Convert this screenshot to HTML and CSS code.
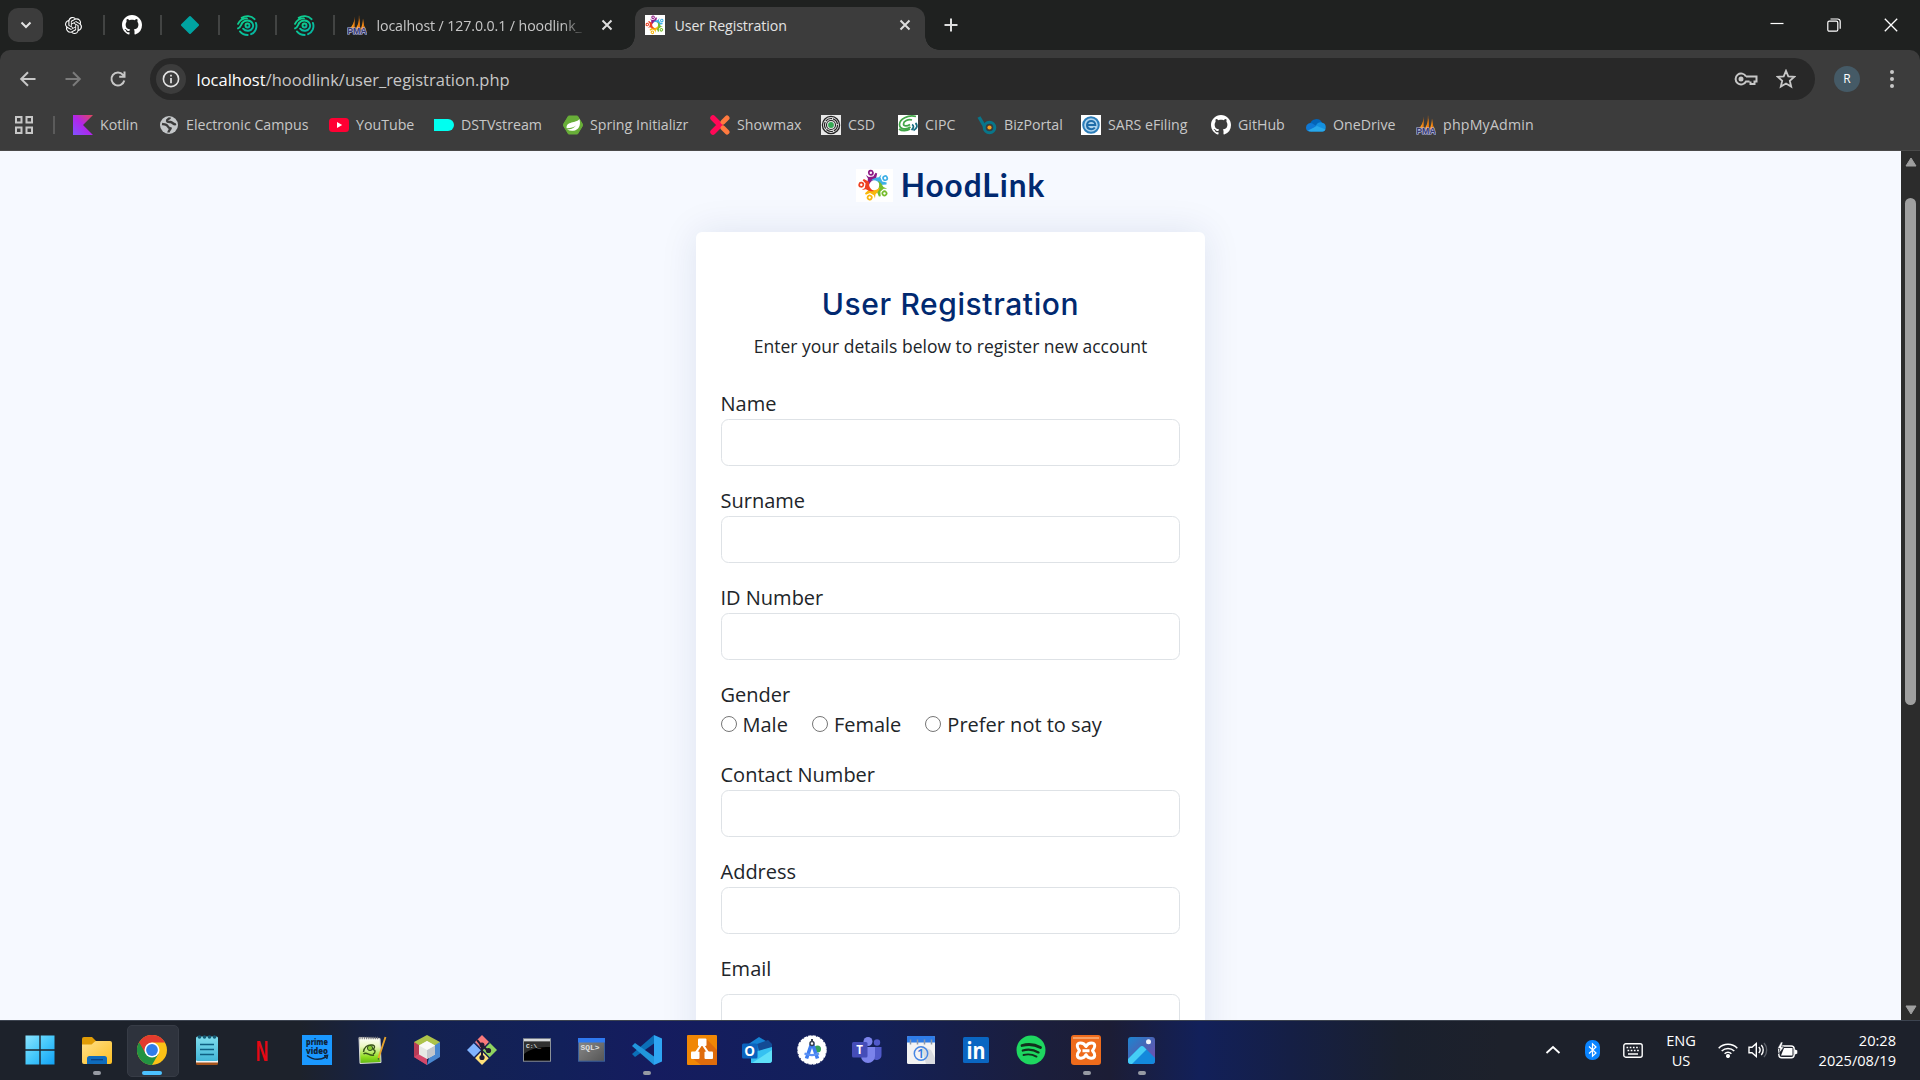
FILE: index.html
```html
<!DOCTYPE html>
<html lang="en">
<head>
<meta charset="utf-8">
<title>User Registration</title>
<link rel="stylesheet" href="styles.css">
</head>
<body>
<svg class="defs" width="0" height="0" aria-hidden="true">
  <defs>
    <linearGradient id="g-kotlin" x1="0" y1="1" x2="1" y2="0"><stop offset="0" stop-color="#7f52ff"/><stop offset=".5" stop-color="#b125ea"/><stop offset="1" stop-color="#e44857"/></linearGradient>
    <linearGradient id="g-win" x1="0" y1="0" x2="1" y2="1"><stop offset="0" stop-color="#8be4ff"/><stop offset=".5" stop-color="#45c8fb"/><stop offset="1" stop-color="#12a2f5"/></linearGradient>
    <linearGradient id="g-folder" x1="0" y1="0" x2="1" y2="1"><stop offset="0" stop-color="#ffe08a"/><stop offset="1" stop-color="#fdbf22"/></linearGradient>
    <linearGradient id="g-note" x1="0" y1="0" x2="0" y2="1"><stop offset="0" stop-color="#7fdcec"/><stop offset="1" stop-color="#42b7d8"/></linearGradient>
    <linearGradient id="g-sql" x1="0" y1="0" x2="1" y2="1"><stop offset="0" stop-color="#8c8c8c"/><stop offset="1" stop-color="#555"/></linearGradient>
    <linearGradient id="g-photo" x1="0" y1="0" x2="1" y2="1"><stop offset="0" stop-color="#1c86d1"/><stop offset=".5" stop-color="#4a63b5"/><stop offset="1" stop-color="#7a4bb0"/></linearGradient>
    <linearGradient id="g-np" x1="0" y1="0" x2="0" y2="1"><stop offset="0" stop-color="#fff"/><stop offset=".35" stop-color="#eaf7c0"/><stop offset=".75" stop-color="#8fdc20"/><stop offset="1" stop-color="#5bb512"/></linearGradient>
    <linearGradient id="g-ring" x1="0" y1="0" x2="1" y2="1"><stop offset="0" stop-color="#10d38a"/><stop offset="1" stop-color="#04b3a4"/></linearGradient>
    <symbol id="github" viewBox="0 0 16 16"><path fill="#fff" d="M8 0C3.58 0 0 3.58 0 8c0 3.54 2.29 6.53 5.47 7.59.4.07.55-.17.55-.38 0-.19-.01-.82-.01-1.49-2.01.37-2.53-.49-2.69-.94-.09-.23-.48-.94-.82-1.13-.28-.15-.68-.52-.01-.53.63-.01 1.08.58 1.23.82.72 1.21 1.87.87 2.33.66.07-.52.28-.87.51-1.07-1.78-.2-3.64-.89-3.64-3.95 0-.87.31-1.59.82-2.15-.08-.2-.36-1.02.08-2.12 0 0 .67-.21 2.2.82.64-.18 1.32-.27 2-.27s1.36.09 2 .27c1.53-1.04 2.2-.82 2.2-.82.44 1.1.16 1.92.08 2.12.51.56.82 1.27.82 2.15 0 3.07-1.87 3.75-3.65 3.95.29.25.54.73.54 1.48 0 1.07-.01 1.93-.01 2.2 0 .21.15.46.55.38A8.01 8.01 0 0 0 16 8c0-4.42-3.58-8-8-8z"/></symbol>
    <symbol id="fingerprint" viewBox="0 0 20 20"><g fill="none" stroke="url(#g-ring)" stroke-width="1.800" stroke-linecap="round"><circle cx="10" cy="10" r="1.900"/><path d="M1 12.800C3.500 11.800 3.700 9.500 5 7.500 7.500 4.200 13 4.500 14.800 8c1.500 3-.2 6.500-3.800 7-2.200.3-4-.5-5.200-2"/><path d="M1 8.400C2.800 4.500 6 3.300 9.500 3.200M4.500 2.700C8 .3 13.500.4 16.700 4M18 7.500c1.600 4.500-.5 9-4.600 10.800M2.800 15.600c2 2.500 4.600 3.400 7.400 3.400"/></g></symbol>
    <symbol id="pma" viewBox="0 0 20 20"><path fill="#f8981d" d="M7.500 1.500C7.800 6 6 11 1.500 14.500h5.800zM12 0c1 5-1 10.500-4 14.500h5.200zM16 3.500c-.2 4-1 7.500-2.500 11h5.700c-2-2.500-3-6-3.200-11z"/><path fill="#e0700a" d="M12 0l1.200 14.500h-2zM7.500 1.500v13H6zM16 3.500l1.300 11h-1.500z"/><text x="10" y="19.400" text-anchor="middle" textLength="19.500" lengthAdjust="spacingAndGlyphs" font-family="Liberation Sans" font-weight="bold" font-size="8.500" fill="#353870" stroke="#b9bde0" stroke-width="1.200" paint-order="stroke">PMA</text></symbol>
    <g id="person"><path d="M10 6l2.800 2.600h4.700L20.400 4.800l1.700 1.100-2.300 6.200C16 12 12.300 14.300 11.400 19c-1.400-3.200-.4-6.400.3-9z"/><circle cx="15.500" cy="4.300" r="3.100"/><circle cx="15.500" cy="4.300" r="1.300" fill="#fff"/></g>
    <symbol id="people" viewBox="0 0 34 34">
      <g transform="translate(17.300 16.800) rotate(-7) scale(.97) translate(-17.500 -18)">
        <use href="#person" fill="#8e1b86"/>
        <use href="#person" transform="rotate(72 17.500 18)" fill="#3fb0e6"/>
        <use href="#person" transform="rotate(144 17.500 18)" fill="#76bc2c"/>
        <use href="#person" transform="rotate(216 17.500 18)" fill="#f9b70c"/>
        <use href="#person" transform="rotate(288 17.500 18)" fill="#ee4023"/>
      </g>
    </symbol>
  </defs>
</svg>

<header class="browser">
  <div class="tabstrip">
    <button class="tab-search"><svg width="12" height="12" viewBox="0 0 12 12"><path d="M1.500 3.500L6 8l4.500-4.500" fill="none" stroke="#e3e3e3" stroke-width="2"/></svg></button>
    <div class="pinned">
      <svg width="17" height="17" viewBox="0 0 24 24"><path fill="#fff" d="M22.280 9.820a5.980 5.980 0 0 0-.52-4.910 6.050 6.050 0 0 0-6.510-2.900A6.070 6.070 0 0 0 4.980 4.180a5.980 5.980 0 0 0-4 2.900 6.050 6.050 0 0 0 .74 7.100 5.980 5.980 0 0 0 .51 4.910 6.050 6.050 0 0 0 6.510 2.900A5.980 5.980 0 0 0 13.260 24a6.060 6.060 0 0 0 5.770-4.210 5.990 5.990 0 0 0 4-2.900 6.060 6.060 0 0 0-.75-7.070zm-9.020 12.610a4.480 4.480 0 0 1-2.880-1.040l.14-.08 4.780-2.760a.8.8 0 0 0 .39-.68v-6.740l2.020 1.170a.07.07 0 0 1 .04.05v5.580a4.500 4.500 0 0 1-4.490 4.500zM3.600 18.300a4.470 4.470 0 0 1-.54-3.010l.14.090 4.780 2.760a.77.77 0 0 0 .78 0l5.840-3.370v2.330a.08.08 0 0 1-.03.06L9.740 19.950a4.500 4.500 0 0 1-6.140-1.650zM2.340 7.900a4.490 4.490 0 0 1 2.370-1.970v5.680a.77.77 0 0 0 .39.680l5.810 3.350-2.020 1.170a.08.08 0 0 1-.07 0L4 14.020A4.500 4.500 0 0 1 2.340 7.900zm16.600 3.860L13.100 8.360l2.020-1.160a.08.08 0 0 1 .07 0l4.830 2.790a4.490 4.490 0 0 1-.68 8.100v-5.680a.79.790 0 0 0-.4-.65zm2.010-3.020l-.14-.09-4.770-2.780a.78.780 0 0 0-.79 0L9.410 9.230V6.900a.07.070 0 0 1 .03-.06l4.830-2.790a4.500 4.500 0 0 1 6.680 4.660zM8.310 12.860l-2.020-1.160a.08.08 0 0 1-.04-.06V6.070a4.500 4.500 0 0 1 7.380-3.450l-.14.080L8.700 5.460a.8.8 0 0 0-.39.68zm1.100-2.360l2.600-1.500 2.600 1.500v3l-2.600 1.500-2.600-1.500z"/></svg>
    </div>
    <div class="pinned"><svg width="20" height="20"><use href="#github"/></svg></div>
    <div class="pinned"><svg width="20" height="20" viewBox="0 0 20 20"><rect x="3.300" y="3.300" width="13.400" height="13.400" rx="1" transform="rotate(45 10 10)" fill="#00a3a1"/></svg></div>
    <div class="pinned"><svg width="21" height="21"><use href="#fingerprint"/></svg></div>
    <div class="pinned"><svg width="21" height="21"><use href="#fingerprint"/></svg></div>
    <div class="tab">
      <svg width="20" height="20"><use href="#pma"/></svg>
      <span class="tab-title fade">localhost / 127.0.0.1 / hoodlink_</span>
      <svg class="close" width="12" height="12" viewBox="0 0 12 12"><path d="M1.500 1.500l9 9M10.500 1.500l-9 9"/></svg>
    </div>
    <div class="tab active">
      <svg class="fav" width="20" height="20" viewBox="0 0 34 34"><use href="#people" width="34" height="34"/></svg>
      <span class="tab-title">User Registration</span>
      <svg class="close" width="12" height="12" viewBox="0 0 12 12"><path d="M1.500 1.500l9 9M10.500 1.500l-9 9"/></svg>
    </div>
    <svg class="newtab" width="14" height="14" viewBox="0 0 14 14"><path d="M7 .5v13M.5 7h13" stroke="#dedede" stroke-width="2"/></svg>
    <div class="window-controls">
      <svg width="14" height="14" viewBox="0 0 14 14"><path d="M.5 5.500h13" stroke="#fff" stroke-width="1.200"/></svg>
      <svg width="14" height="14" viewBox="0 0 14 14" fill="none" stroke="#fff" stroke-width="1.200"><rect x=".8" y="3.200" width="10" height="10" rx="1.500"/><path d="M3.500 1h7.200A2.500 2.500 0 0 1 13.200 3.500v7.200"/></svg>
      <svg width="14" height="14" viewBox="0 0 14 14"><path d="M.8.800l12.400 12.400M13.200.800L.8 13.200" stroke="#fff" stroke-width="1.300"/></svg>
    </div>
  </div>

  <div class="toolbar">
    <div class="nav">
      <svg width="18" height="18" viewBox="0 0 18 18" fill="none" stroke="#c7c7c7" stroke-width="2"><path d="M16.500 9H2.500M9 2.200L2.200 9 9 15.800"/></svg>
      <svg width="18" height="18" viewBox="0 0 18 18" fill="none" stroke="#7b7b7b" stroke-width="2"><path d="M1.500 9h14M9 2.200L15.800 9 9 15.800"/></svg>
      <svg width="18" height="18" viewBox="0 0 18 18" fill="none" stroke="#c7c7c7" stroke-width="2"><path d="M15.300 10.500A6.500 6.500 0 1 1 14 4.800l1.500 1.700M15.500 1.500v5.300h-5.300"/></svg>
    </div>
    <div class="omnibox">
      <span class="info"><svg width="18" height="18" viewBox="0 0 18 18"><circle cx="9" cy="9" r="7.600" fill="none" stroke="#e3e3e3" stroke-width="1.600"/><path d="M9 8v5.200M9 4.700v1.900" stroke="#e3e3e3" stroke-width="1.700"/></svg></span>
      <span class="url"><b>localhost</b>/hoodlink/user_registration.php</span>
      <svg class="key" width="24" height="16" viewBox="0 0 24 16" fill="none" stroke="#c7c7c7" stroke-width="2"><path d="M12 5.500A5.500 5.500 0 1 0 12 10.500h3.500M12 5.500h10.500v5h-2V13h-4v-2.500"/><circle cx="7" cy="8" r="1.500" fill="#c7c7c7"/></svg>
      <svg width="20" height="20" viewBox="0 0 20 20"><path d="M10 1.800l2.300 5.500 6 .5-4.500 3.900 1.400 5.900L10 14.500l-5.200 3.100 1.400-5.900L1.700 7.800l6-.5z" fill="none" stroke="#c7c7c7" stroke-width="1.800"/></svg>
    </div>
    <span class="avatar">R</span>
    <svg class="dots" width="6" height="20" viewBox="0 0 6 20" fill="#c7c7c7"><circle cx="3" cy="3" r="2"/><circle cx="3" cy="10" r="2"/><circle cx="3" cy="17" r="2"/></svg>
  </div>

  <nav class="bookmarks">
    <svg class="apps" width="18" height="18" viewBox="0 0 18 18" fill="none" stroke="#c7c7c7" stroke-width="2"><path d="M1 1h5.500v5.500H1zM11.500 1H17v5.500h-5.500zM1 11.500h5.500V17H1zM11.500 11.500H17V17h-5.500z"/></svg>
    <a><svg width="20" height="20" viewBox="0 0 20 20"><path d="M0 0h20L10 10l10 10H0z" fill="url(#g-kotlin)"/></svg><span>Kotlin</span></a>
    <a><svg width="20" height="20" viewBox="0 0 20 20"><circle cx="10" cy="10" r="9" fill="#c4c7c9"/><path d="M11 2.500c-.5 1.800-3.500 1.500-3 3.500.3 1.300 2 .8 3.500 1 2.500.5 3 3 5.500 2M3 9c2 .3 4.500.3 5.500 2s1.500 2 3 2.500c-.5 1.500-2 2-2 4" fill="none" stroke="#3c3c3c" stroke-width="2.400"/></svg><span>Electronic Campus</span></a>
    <a><svg width="20" height="20" viewBox="0 0 20 20"><rect y="3" width="20" height="14" rx="3.500" fill="#ff0033"/><path d="M8 7l5.200 3L8 13z" fill="#fff"/></svg><span>YouTube</span></a>
    <a><svg width="20" height="20" viewBox="0 0 20 20"><path d="M0 4h14a6 6 0 0 1 0 12H0z" fill="#00fff0"/></svg><span>DSTVstream</span></a>
    <a><svg width="20" height="20" viewBox="0 0 20 20"><path d="M5.500 1h9L20 10l-5.500 9h-9L0 10z" fill="#68ae38" stroke="#68ae38" stroke-linejoin="round"/><path d="M16.500 4c1.500 6-.5 11.300-6.500 11.800-2 .2-4-.2-6-1.300 3 0 6.500-.8 9-4-2.500 2-5.500 2.800-9.400 2.700C3 6 13 8.500 16.500 4z" fill="#fff"/></svg><span>Spring Initializr</span></a>
    <a><svg width="20" height="20" viewBox="0 0 20 20"><path d="M3 3l7 7M3 17l7-7" stroke="#ff0857" stroke-width="5.500" stroke-linecap="round"/><path d="M17 3l-4 4M17 17l-4-4" stroke="#ff7a3f" stroke-width="5" stroke-linecap="round"/><path d="M7.500 7L11 10l-3.500 3z" fill="#ff0857"/></svg><span>Showmax</span></a>
    <a><svg width="20" height="20" viewBox="0 0 20 20"><path d="M0 0h20v20H0z" fill="#e8e8e8"/><g fill="none" stroke="#222"><circle cx="10" cy="10" r="8.600" stroke-width="1.300"/><circle cx="10" cy="10" r="6.500" stroke-width="1.200" stroke-dasharray="7 1"/><circle cx="10" cy="10" r="4.500" stroke-width="1.100"/></g><circle cx="10" cy="10" r="2.900" fill="#34a853"/></svg><span>CSD</span></a>
    <a><svg width="20" height="20" viewBox="0 0 20 20"><path d="M0 0h20v20H0z" fill="#fff"/><g fill="none" stroke="#42a648" stroke-width="1.700"><path d="M18 1.500C10-.5 1.500 4 1.500 9.500c0 5 7 5.500 11 2.500M14 5C10 3.800 5.500 6.300 5.500 9s4 2.300 6.500.5M1 14c3 2.500 8 2 11 0"/></g><path d="M14 9.500c2 1 2 3.500-.5 5.500M17.500 8c2.500 2.500 1.500 5.500-2 7.500" fill="none" stroke="#176c80" stroke-width="1.800"/></svg><span>CIPC</span></a>
    <a><svg width="20" height="20" viewBox="0 0 20 20"><circle cx="12.500" cy="12.500" r="5.300" fill="none" stroke="#08768a" stroke-width="3"/><path d="M2 2l5.500 9.500" stroke="#08768a" stroke-width="3.400"/><circle cx="12.500" cy="12.500" r="2.100" fill="#f9a01b"/></svg><span>BizPortal</span></a>
    <a><svg width="20" height="20" viewBox="0 0 20 20"><path d="M0 0h20v20H0z" fill="#fff"/><circle cx="10" cy="10" r="7.800" fill="#aed4ed" stroke="#2b7db9" stroke-width="2"/><path d="M6 10h8.300c0-5.500-8.300-5.500-8.300 0 0 5 5.500 5 7.800 2.600" fill="none" stroke="#1f6ca8" stroke-width="2"/></svg><span>SARS eFiling</span></a>
    <a><svg width="20" height="20"><use href="#github"/></svg><span>GitHub</span></a>
    <a><svg width="20" height="20" viewBox="0 0 20 20"><path d="M4 9a6.500 6.500 0 0 1 12-1.500l-8 8.500z" fill="#0364b8"/><path d="M0 12.500A4.500 4.500 0 0 1 6.500 8.500l7 4.500-8 3.500H4a4 4 0 0 1-4-4z" fill="#0f78d4"/><path d="M10 10.500c1.500-3.500 5-4 7-2.500 4 1 3.500 8.500-.5 8.500H5z" fill="#1490df"/><path d="M2 15.500l9-4.500 8.500 3.500a3.500 3.500 0 0 1-3 2H4a4 4 0 0 1-2-1z" fill="#28a8ea"/></svg><span>OneDrive</span></a>
    <a><svg width="20" height="20"><use href="#pma"/></svg><span class="wide">phpMyAdmin</span></a>
  </nav>
</header>

<div class="viewport">
  <main class="page">
    <div class="brand">
      <svg class="brand-logo" width="37" height="33" viewBox="0 0 37 33"><path d="M0 0h37v33H0z" fill="#fff"/><use href="#people" x="1.500" y="0" width="33" height="33"/></svg>
      <span>HoodLink</span>
    </div>
    <form class="card">
      <h1>User Registration</h1>
      <p>Enter your details below to register new account</p>
      <div class="field"><label>Name</label><input type="text"></div>
      <div class="field"><label>Surname</label><input type="text"></div>
      <div class="field"><label>ID Number</label><input type="text"></div>
      <div class="field"><label>Gender</label>
        <div class="radios">
          <label><i></i>Male</label><label><i></i>Female</label><label><i></i>Prefer not to say</label>
        </div>
      </div>
      <div class="field"><label>Contact Number</label><input type="text"></div>
      <div class="field"><label>Address</label><input type="text"></div>
      <div class="field spaced"><label>Email</label><input type="text"></div>
    </form>
  </main>
  <div class="scrollbar">
    <svg width="12" height="10" viewBox="0 0 12 10"><path d="M6 1l5 8H1z" fill="#9f9f9f" stroke="#9f9f9f" stroke-linejoin="round"/></svg>
    <div class="thumb"></div>
    <svg width="12" height="10" viewBox="0 0 12 10"><path d="M6 9l5-8H1z" fill="#9f9f9f" stroke="#9f9f9f" stroke-linejoin="round"/></svg>
  </div>
</div>

<footer class="taskbar">
  <div class="apps-row">
    <div class="app start"><svg width="30" height="30" viewBox="0 0 30 30"><path d="M.5.500H14.300V14.300H.5zM15.700.500H29.500V14.300H15.700zM.5 15.700H14.300V29.500H.5zM15.700 15.700H29.500V29.500H15.700z" fill="url(#g-win)"/></svg></div>
    <div class="app running"><svg width="30" height="30" viewBox="0 0 30 30"><path d="M0 4a2 2 0 0 1 2-2h8l3.500 3.500V10H0z" fill="#e09c06"/><path d="M0 9.500h9.500L13.500 6H28a2 2 0 0 1 2 2v19a2 2 0 0 1-2 2H2a2 2 0 0 1-2-2z" fill="url(#g-folder)"/><path d="M5 29v-5.500a2.500 2.500 0 0 1 2.500-2.500h15a2.500 2.500 0 0 1 2.500 2.500V29z" fill="#0f6cbd"/><path d="M9 24.700h12" stroke="#0a3f80" stroke-width="1.200"/></svg></div>
    <div class="app current"><svg width="30" height="30" viewBox="0 0 30 30"><circle cx="15" cy="15" r="15" fill="#fbc116"/><path d="M2 7.500A15 15 0 0 0 15 30l6.500-11.200L15 15z" fill="#229342"/><path d="M2 7.500A15 15 0 0 1 28 7.500H15L8.500 11.300 8.500 18.700z" fill="#e33b2e"/><path d="M2 7.500L8.500 18.700 15 22 9 25 3 16z" fill="#229342"/><circle cx="15" cy="15" r="7.500" fill="#fff"/><circle cx="15" cy="15" r="5.900" fill="#2f7de9"/></svg></div>
    <div class="app"><svg width="30" height="30" viewBox="0 0 30 30"><path d="M4 25h22v3.500a1.500 1.500 0 0 1-1.500 1.500h-19A1.500 1.500 0 0 1 4 28.500z" fill="#a5541c"/><path d="M4 24h22v3.500H4z" fill="#f3f3f3"/><rect x="4" y="1.500" width="22" height="24.500" rx="1.500" fill="url(#g-note)"/><path d="M8 9.500h14M8 14.500h14M8 19.500h14" stroke="#0f5f82" stroke-width="1.700"/><g fill="#145a74"><circle cx="7.500" cy="2" r="1.800"/><circle cx="12.500" cy="2" r="1.800"/><circle cx="17.500" cy="2" r="1.800"/><circle cx="22.500" cy="2" r="1.800"/></g></svg></div>
    <div class="app"><svg width="30" height="30" viewBox="0 0 30 30"><text x="15" y="25.500" text-anchor="middle" textLength="12.500" lengthAdjust="spacingAndGlyphs" font-family="Liberation Sans" font-weight="bold" font-size="30" fill="#e50914">N</text></svg></div>
    <div class="app"><svg width="30" height="30" viewBox="0 0 30 30"><path d="M0 0h30v30H0z" fill="#1a98ff"/><g font-family="Open Sans" font-weight="800" font-size="8.500" fill="#10243a" text-anchor="middle"><text x="15" y="10" textLength="22" lengthAdjust="spacingAndGlyphs">prime</text><text x="15" y="18.700" textLength="22" lengthAdjust="spacingAndGlyphs">video</text></g><path d="M5 20.500c6 4.500 13 4.700 19 1.500M22 20.700l3.500-.3-.8 3.500" fill="none" stroke="#10243a" stroke-width="1.500"/></svg></div>
    <div class="app"><svg width="30" height="30" viewBox="0 0 30 30"><path d="M2 2.500l21 1 1 24L3 28.500z" fill="url(#g-np)" stroke="#d8d8d8"/><path d="M2.500 3h20" stroke="#777" stroke-width="2.500" stroke-dasharray="1 1.200"/><path d="M6.500 17c.5-5 4-7.500 8.500-7 4 .5 2.500 3.500.5 4.500 3.500 0 3 3.500.5 4.500M6.500 19c3-3 6 2.500 10.500 1" fill="none" stroke="#39551a" stroke-width="1.400"/><circle cx="13" cy="13" r="2.600" fill="#8acb31" stroke="#35551d"/><path d="M28.500 2L21.500 23" stroke="#e6a32c" stroke-width="1.900"/><path d="M20.800 23l.2 2.500 1.200-2z" fill="#444"/></svg></div>
    <div class="app"><svg width="30" height="30" viewBox="0 0 30 30"><path d="M15 0l13 7v3l-13 5L2 10V7z" fill="#adc34a"/><path d="M2 7l8 5 5 18L2 22z" fill="#b73c56"/><path d="M28 7l-8 5-5 18 13-8z" fill="#4a88d0"/><path d="M2 22l6-4 7 4v8z" fill="#d4496b"/><path d="M15 6l8 4.500v9L15 24l-8-4.500v-9z" fill="#e6e9e4"/><path d="M15 15l8-4.500v9L15 24z" fill="#c3c7cc"/><path d="M15 6l8 4.500L15 15l-8-4.500z" fill="#fafaf7"/></svg></div>
    <div class="app"><svg width="30" height="30" viewBox="0 0 30 30"><path d="M15 0l7 7-7 7.500L8 7z" fill="#f9797b"/><path d="M8 7l7 8-7 8-8-8z" fill="#80b3ff"/><path d="M22 7l8 8-8 8-7-8z" fill="#8fd460"/><path d="M15 15l7 8-7 7-7-7z" fill="#ffe07a"/><path d="M7 7.500l15.500 15.500M22.500 7.500L7 23" stroke="#141f54" stroke-width="1.400"/><path d="M10 5l5 6v11M15 10l6 6" stroke="#221c35" stroke-width="2" fill="none"/><g fill="#221c35"><circle cx="15" cy="10" r="2.500"/><circle cx="15" cy="22.500" r="2.600"/><circle cx="21.500" cy="15.500" r="2.600"/></g></svg></div>
    <div class="app"><svg width="28" height="24" viewBox="0 0 28 24"><rect x=".5" y=".7" width="27" height="22.500" fill="#000" stroke="#8c9298"/><path d="M1 1h26v2.500H1z" fill="#d8dadd"/><path d="M1 4h26v5C16 9 8 10 1 16z" fill="#303030"/><text x="3" y="9.500" textLength="15" lengthAdjust="spacingAndGlyphs" font-family="Liberation Mono" font-weight="bold" font-size="6" fill="#e0e0e0">C:\_</text></svg></div>
    <div class="app"><svg width="27" height="24" viewBox="0 0 27 24"><rect x=".5" y=".7" width="26" height="22.500" fill="url(#g-sql)" stroke="#3a5f9c"/><path d="M0 0h27v4.500H0z" fill="#2f79f0"/><text x="2.500" y="12" textLength="19" lengthAdjust="spacingAndGlyphs" font-family="Liberation Mono" font-weight="bold" font-size="8" fill="#e0e0e0">SQL&gt;</text></svg></div>
    <div class="app running"><svg width="30" height="30" viewBox="0 0 30 30"><path d="M0 19L22 0v8.500L3 22z" fill="#0b6fb8"/><path d="M0 11L22 30v-8.500L3 8z" fill="#2196dc"/><path d="M22 0l8 3.500v23L22 30z" fill="#2ea5f3"/></svg></div>
    <div class="app"><svg width="30" height="30" viewBox="0 0 30 30"><rect width="30" height="30" rx="1" fill="#f08705"/><path d="M19 3.500L30 15v14l-1 1H14L5 23z" fill="#df6c0c"/><path d="M14 10l-6 9M16 10l6 9" stroke="#fff" stroke-width="2.200"/><g fill="#fff"><rect x="11" y="3.500" width="8.500" height="7.500" rx="1"/><rect x="4" y="16.500" width="8.500" height="7.500" rx="1"/><rect x="17.500" y="16.500" width="8.500" height="7.500" rx="1"/></g></svg></div>
    <div class="app"><svg width="30" height="30" viewBox="0 0 30 30"><path d="M5 10L17 2l12 7v9H5z" fill="#1583d5"/><path d="M15 9L26 5l4 4v8l-11 5z" fill="#134b95"/><path d="M9 28V18L30 12v13a3 3 0 0 1-3 3z" fill="#35c1f1"/><path d="M10 28l20-13v10a3 3 0 0 1-3 3z" fill="#5fe0f8"/><rect y="8.500" width="15.500" height="15" rx="1.500" fill="#0a63be"/><text x="7.700" y="20.700" text-anchor="middle" font-family="Open Sans" font-weight="bold" font-size="13.500" fill="#fff">O</text></svg></div>
    <div class="app"><svg width="30" height="30" viewBox="0 0 30 30"><circle cx="15" cy="15" r="14" fill="#fff" stroke="#fff" stroke-width="1.500" stroke-dasharray="3.500 .9"/><circle cx="20.500" cy="14" r="3.500" fill="#34a35a"/><path d="M14.500 9L9.500 23.500M15.500 9l5 14.500" stroke="#3f7ef0" stroke-width="3.600"/><path d="M7.500 18.500c5 2 10 2 14.500 0" fill="none" stroke="#5b91f5" stroke-width="2.200"/><circle cx="15" cy="8.500" r="2" fill="#fff" stroke="#333e50" stroke-width="1.500"/><path d="M15 4v3" stroke="#333e50" stroke-width="2"/></svg></div>
    <div class="app"><svg width="30" height="28" viewBox="0 0 30 28"><circle cx="25" cy="6.500" r="3.200" fill="#5059c9"/><path d="M20 11h9.500v8a5 5 0 0 1-9 3z" fill="#5059c9"/><circle cx="16" cy="5.500" r="4.500" fill="#7b83eb"/><path d="M9 11h14v9a7 7 0 0 1-14 0z" fill="#7b83eb"/><rect y="6" width="15.500" height="15.500" rx="1.500" fill="#454db8"/><text x="7.700" y="17.800" text-anchor="middle" font-family="Open Sans" font-weight="bold" font-size="11.500" fill="#fff">T</text></svg></div>
    <div class="app"><svg width="28" height="28" viewBox="0 0 28 28"><rect width="28" height="28" rx="1.500" fill="#f3f3f3"/><path d="M0 6.500V1.500A1.500 1.500 0 0 1 1.500 0h25A1.500 1.500 0 0 1 28 1.500v5z" fill="#2f7de8"/><path d="M14 10l10 4 4 8v6H19z" fill="#d9dbe0"/><path d="M3.500 3.500v5M10.500 3.500v5M17.500 3.500v5M24.500 3.500v5" stroke="#8d98a8" stroke-width="1.500"/><circle cx="14" cy="17.500" r="6.700" fill="none" stroke="#4687e4" stroke-width="1.500"/><text x="13.800" y="22.300" text-anchor="middle" font-family="Open Sans" font-weight="600" font-size="13" fill="#3377dc">1</text></svg></div>
    <div class="app"><svg width="34" height="34" viewBox="0 0 34 34"><rect x="4" y="4" width="26" height="26" rx="1.500" fill="#0a66c2"/><text x="17" y="25.800" text-anchor="middle" textLength="19" lengthAdjust="spacingAndGlyphs" font-family="Open Sans" font-weight="bold" font-size="23" fill="#fff">in</text></svg></div>
    <div class="app"><svg width="30" height="30" viewBox="0 0 30 30"><circle cx="15" cy="15" r="14.500" fill="#1ed760"/><g fill="none" stroke="#12301d" stroke-linecap="round"><path d="M6 10.500c6-1.700 13-1 18.500 2" stroke-width="2.800"/><path d="M6.800 15.500c5.500-1.500 11-.8 15.700 1.900" stroke-width="2.300"/><path d="M7.500 20c4.700-1.200 9-.6 13 1.600" stroke-width="1.900"/></g></svg></div>
    <div class="app running"><svg width="30" height="30" viewBox="0 0 30 30"><rect width="30" height="30" rx="3" fill="#ee6b1c"/><path d="M2 2h26v2H2z" fill="#f7a064"/><path d="M15 11.500C12.500 6.500 6 7 6.300 11c.1 2 1.200 3.200 2.200 4.700-1.300 1.500-2.400 2.800-2.200 4.800.4 3.800 6.700 3.800 8.700-.8 2 4.600 8.300 4.600 8.700.8.200-2-.9-3.300-2.200-4.800 1-1.500 2.100-2.700 2.200-4.700.3-4-6.200-4.500-8.700.5zM11.500 15.700h7" fill="none" stroke="#fff" stroke-width="3" stroke-linejoin="round"/></svg></div>
    <div class="app running"><svg width="27" height="27" viewBox="0 0 27 27"><rect width="27" height="27" rx="3" fill="url(#g-photo)"/><path d="M0 22L12 10a3 3 0 0 1 4 0L27 21v3a3 3 0 0 1-3 3H3a3 3 0 0 1-3-3z" fill="#1389dc"/><path d="M0 22L12 10a3 3 0 0 1 4 0l2.500 2.500L4 27H3a3 3 0 0 1-3-3z" fill="#45cdf6"/><circle cx="20.500" cy="4.800" r="2.500" fill="#f2f4fb"/></svg></div>
  </div>
  <div class="tray">
    <svg class="t-chev" width="16" height="10" viewBox="0 0 16 10"><path d="M1.500 8L8 2l6.500 6" fill="none" stroke="#fff" stroke-width="1.800"/></svg>
    <svg class="t-bt" width="15" height="20" viewBox="0 0 15 20"><rect width="15" height="20" rx="7" fill="#0a84ff"/><path d="M4 6.500l7 6.500-3.500 3.200V3.800L11 7l-7 6.500" fill="none" stroke="#fff" stroke-width="1.200"/></svg>
    <svg class="t-kb" width="20" height="15" viewBox="0 0 20 15"><rect x=".8" y=".8" width="18.400" height="13.400" rx="2" fill="none" stroke="#fff" stroke-width="1.400"/><path d="M3.500 4.500h13M4.500 7.500h12" stroke="#fff" stroke-width="1.700" stroke-dasharray="1.700 1.500"/><path d="M5 11h10" stroke="#fff" stroke-width="1.500"/></svg>
    <div class="lang">ENG<br>US</div>
    <svg class="t-wifi" width="20" height="16" viewBox="0 0 20 16" fill="none" stroke="#fff" stroke-width="1.500"><path d="M.7 6.200a13 13 0 0 1 18.600 0M3.700 9a9 9 0 0 1 12.600 0M6.600 11.700a5 5 0 0 1 6.800 0"/><circle cx="10" cy="14" r="1.300" fill="#fff"/></svg>
    <svg class="t-vol" width="20" height="16" viewBox="0 0 20 16" fill="none" stroke="#fff" stroke-width="1.400"><path d="M1 5.300h3L8.300 1.500v13L4 10.700H1zM10.800 5a4.500 4.500 0 0 1 0 6M13.300 3a7.500 7.500 0 0 1 0 10"/><path d="M16 1a10.500 10.500 0 0 1 0 14" stroke="#5c6068"/></svg>
    <svg class="t-bat" width="21" height="17" viewBox="0 0 21 17"><rect x="1.800" y="4" width="15.400" height="11.700" rx="3" fill="none" stroke="#fff" stroke-width="1.400"/><path d="M4 13.500L7 6h8.500v7.500zM18 7.500l2.300 1v3l-2.300 1z" fill="#fff"/><path d="M4 0L.5 6.500H3L1.500 12l5.500-7H4.500L6 0z" fill="#fff" stroke="#1c212b" stroke-width=".6"/></svg>
    <div class="clock">20:28<br>2025/08/19</div>
  </div>
</footer>
</body>
</html>
```
FILE: styles.css
```css
* { box-sizing: border-box; }
html, body { margin: 0; height: 100%; overflow: hidden; }
body {
  width: 1920px;
  height: 1080px;
  display: flex;
  flex-direction: column;
  font-family: "Open Sans", "Noto Sans", sans-serif;
}
svg { display: block; flex: none; }
.defs { position: absolute; }

/* Browser frame */
.browser { height: 151px; flex: none; background: #1f2120; border-bottom: 1px solid #4a4a4a; }
.tabstrip { display: flex; align-items: center; height: 50px; padding-left: 8px; }
.tab-search {
  width: 35px; height: 34px; margin-right: 2px; padding: 0;
  border: 0; border-radius: 10px; background: #3c3c3c;
  display: flex; align-items: center; justify-content: center;
}
.pinned {
  width: 57.500px; height: 20px; display: flex; align-items: center; justify-content: center;
  border-right: 2px solid #424443;
}
.pinned:nth-child(2) { width: 59.500px; }
.tab { display: flex; align-items: center; height: 50px; padding-left: 12px; width: 300px; }
.tab-title { flex: none; width: 210px; margin-left: 10px; font-size: 14.200px; color: #c7c7c7; white-space: nowrap; overflow: hidden; letter-spacing: -.1px; }
.fade { -webkit-mask-image: linear-gradient(90deg, #000 88%, transparent); mask-image: linear-gradient(90deg, #000 88%, transparent); }
.close { margin-left: 14px; }
.close path { stroke: #dedede; stroke-width: 2; }
.tab.active {
  position: relative; width: 290px; height: 43px; align-self: flex-end; padding: 0 0 7px 10px;
  background: #3c3c3c; border-radius: 12px 12px 0 0;
}
.tab.active .tab-title { color: #e3e3e3; }
.tab.active::before, .tab.active::after {
  content: ""; position: absolute; bottom: 0; width: 14px; height: 14px;
}
.tab.active::before { left: -14px; background: radial-gradient(circle at 0 0, transparent 13.500px, #3c3c3c 14px); }
.tab.active::after { right: -14px; background: radial-gradient(circle at 100% 0, transparent 13.500px, #3c3c3c 14px); }
.fav { background: #fff; }
.newtab { margin-left: 19px; }
.window-controls { display: flex; gap: 43px; margin-left: auto; padding-right: 22px; }

.toolbar { display: flex; align-items: center; height: 57px; background: #3c3c3c; border-radius: 10px 10px 0 0; }
.nav { display: flex; gap: 27px; padding-left: 18.500px; width: 150px; }
.omnibox {
  display: flex; align-items: center; width: 1665px; height: 42px; padding: 0 19px 0 6px;
  border-radius: 21px; background: #282828;
}
.info { display: flex; align-items: center; justify-content: center; width: 30px; height: 30px; border-radius: 50%; background: #3c3c3c; }
.url { flex: 1; padding-left: 10.500px; margin-top: 1px; font-size: 16.500px; color: #c7c7c7; }
.url b { font-weight: 400; color: #fff; }
.key { margin-right: 18px; }
.avatar {
  width: 26px; height: 26px; margin-left: 19px; border-radius: 50%; background: #455a66;
  color: #fff; font-size: 12px; line-height: 26px; text-align: center;
}
.dots { margin-left: 29px; }

.bookmarks {
  display: grid; align-content: center; align-items: center; height: 43px; padding: 0 0 8px 15px;
  grid-template-columns: 58px 86px 170px 105px 129px 147px 111px 77px 79px 104px 130px 95px 110px 130px;
  background: #3c3c3c;
}
.bookmarks a { display: flex; align-items: center; gap: 7px; font-size: 14.200px; color: #c7c7c7; white-space: nowrap; }
.bookmarks span { line-height: 20px; }
.bookmarks .wide { letter-spacing: .2px; }
.apps { justify-self: start; box-sizing: content-box; padding-right: 20px; border-right: 2px solid #5b5b5b; }

/* Web page */
.viewport { display: flex; height: 869px; flex: none; overflow: hidden; background: #f6f9ff; }
.page { width: 1901px; display: flex; flex-direction: column; align-items: center; overflow: hidden; color: #212529; }
.brand { display: flex; align-items: center; gap: 8px; height: 33px; margin-top: 18px; margin-bottom: 30px; flex: none; }
.brand span { font: 700 31.500px/33px Lato, sans-serif; color: #012970; letter-spacing: 1px; }
.card {
  width: 509px; height: 900px; flex: none; padding: 50px 25px 0; background: #fff; border-radius: 6px;
  box-shadow: 0 0 37.500px rgba(1, 41, 112, .1);
}
.card h1 { margin: 0; height: 45px; font: 500 30px/45px Inter, sans-serif; letter-spacing: .6px; color: #012970; text-align: center; }
.card p { margin: 5px 0 28px; height: 29px; font-size: 17.500px; line-height: 29px; text-align: center; white-space: nowrap; }
.field { display: flex; flex-direction: column; margin: 0 0 20px -.5px; font-size: 20px; line-height: 30px; }
.field > label { height: 30px; }
.field input { height: 47px; border: 1px solid #dee2e6; border-radius: 7.500px; background: #fff; }
.spaced { gap: 10px; }
.radios { display: flex; gap: 24px; }
.radios label { display: flex; align-items: center; gap: 6px; height: 30px; }
.radios i { width: 16px; height: 16px; margin-top: -3px; border: 1.300px solid #767676; border-radius: 50%; }
.scrollbar { width: 19px; padding: 6px 0 5px; display: flex; flex-direction: column; align-items: center; background: #2c2c2c; }
.thumb { width: 11px; height: 507px; margin: 31px 0 auto; border-radius: 6px; background: #9f9f9f; }

/* Taskbar */
.taskbar {
  display: flex; justify-content: space-between; height: 60px; flex: none; padding-left: 14.500px;
  border-top: 1px solid #3d4450;
  background: linear-gradient(90deg, #1d222b 0, #1d222b 300px, #14224f 400px, #12205a 560px, #151c5f 650px, #12205a 860px, #1b1e3c 1040px, #1c1d35 1110px, #12205a 1200px, #151f45 1290px, #1a202e 1400px, #1d212b 1500px);
}
.apps-row { display: flex; }
.app { position: relative; display: flex; align-items: center; justify-content: center; width: 54.980px; height: 58px; }
.app.start { padding-right: 3px; }
.app svg { position: relative; }
.running::after, .current::after {
  content: ""; position: absolute; left: 24px; top: 50px; width: 8px; height: 4px; border-radius: 2px; background: #969aa3;
}
.current::before {
  content: ""; position: absolute; left: 2.500px; top: 4px; width: 50px; height: 50px; border-radius: 5px;
  background: #2e333d; border: 1px solid #373c46;
}
.current::after { left: 17.500px; width: 20px; background: #4cc2ff; }
.tray { display: flex; align-items: center; padding-right: 24px; color: #fff; font-size: 14.600px; line-height: 20px; height: 58px; }
.t-bt { margin-left: 24px; }
.t-kb { margin-left: 23px; }
.lang { width: 40px; margin-left: 18px; margin-top: -1px; text-align: center; }
.t-wifi { margin-left: 17px; }
.t-vol { margin-left: 10px; }
.t-bat { margin-left: 9px; }
.clock { width: 98px; margin-top: -1px; text-align: right; }
```
